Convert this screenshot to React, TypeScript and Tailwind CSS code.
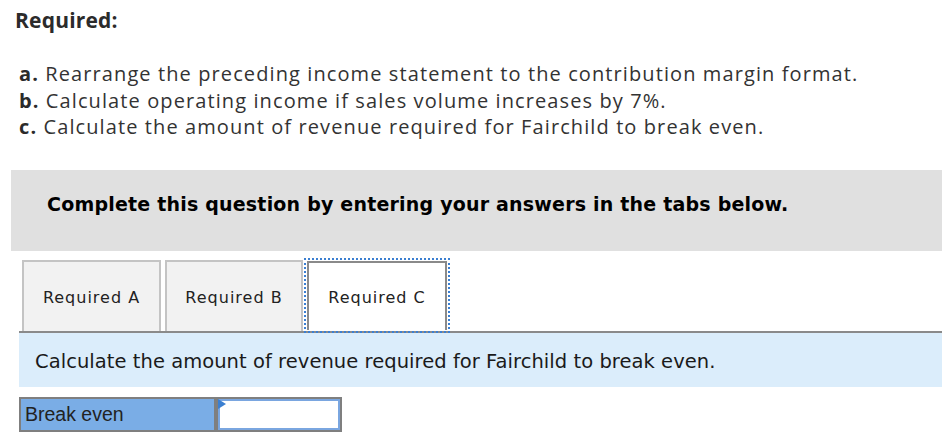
export default function App() {
  return (
    <div className="w-[942px] h-[443px] bg-white overflow-hidden relative">
      <div className="pl-[15px] pt-[5px] font-['Open_Sans',sans-serif] text-[#2b2b2b]">
        <div className="text-[21px] font-bold leading-[30px] tracking-[0.2px]">Required:</div>
        <div className="mt-[26px] pl-[4px] text-[20px] leading-[26.5px] tracking-[1.1px] text-[#333]">
          <div><b className="text-[#2b2b2b]">a.</b> Rearrange the preceding income statement to the contribution margin format.</div>
          <div><b className="text-[#2b2b2b]">b.</b> Calculate operating income if sales volume increases by 7%.</div>
          <div><b className="text-[#2b2b2b]">c.</b> Calculate the amount of revenue required for Fairchild to break even.</div>
        </div>
      </div>

      <div className="absolute left-[11px] top-[170px] w-[940px] h-[81px] bg-[#e0e0e0] flex items-center pl-[36px] pb-[13px]">
        <span className="font-['DejaVu_Sans',sans-serif] font-bold text-[19px] tracking-[0.2px] text-black">
          Complete this question by entering your answers in the tabs below.
        </span>
      </div>

      <div className="absolute left-[19px] top-[260px] right-0 font-['DejaVu_Sans',sans-serif]">
        <div className="flex items-end h-[73px] border-b-2 border-[#8a8a8a]">
          <div className="ml-[3px] w-[139px] h-[71px] bg-[#f2f2f2] border-2 border-b-0 border-[#c4c4c4] flex items-center justify-center pt-[3px] text-[16px] tracking-[1px] text-[#222]">
            Required A
          </div>
          <div className="ml-[4px] w-[138px] h-[71px] bg-[#f2f2f2] border-2 border-b-0 border-[#c4c4c4] flex items-center justify-center pt-[3px] text-[16px] tracking-[1px] text-[#222]">
            Required B
          </div>
          <div className="ml-[1px] w-[146px] h-[75px] -mb-[2px] border-2 border-dotted border-[#3b7fd1] p-[1px] relative z-10">
            <div className="w-full h-full bg-white border-2 border-b-0 border-[#8a8a8a] flex items-center justify-center pt-[3px] text-[16px] tracking-[1px] text-[#222]">
              Required C
            </div>
          </div>
        </div>
        <div className="h-[54px] bg-[#dbedfb] flex items-center pl-[16px] pt-[3px] text-[19.5px] tracking-[0.05px] text-[#1a1a1a]">
          Calculate the amount of revenue required for Fairchild to break even.
        </div>
        <div className="mt-[10px] flex">
          <div className="w-[197px] h-[35px] bg-[#7aade6] border-2 border-[#7f7f7f] flex items-center pl-[4px] font-['Liberation_Sans',sans-serif] text-[19.5px] text-[#222]">
            Break even
          </div>
          <div className="w-[126px] h-[35px] border-2 border-[#7f7f7f] bg-white relative">
            <div className="w-full h-full border-2 border-[#7aa6e0]"></div>
            <div className="absolute left-0 top-0 w-0 h-0 border-t-[5px] border-b-[5px] border-l-[8px] border-t-transparent border-b-transparent border-l-[#3b7fd1]"></div>
          </div>
        </div>
      </div>
    </div>
  );
}
